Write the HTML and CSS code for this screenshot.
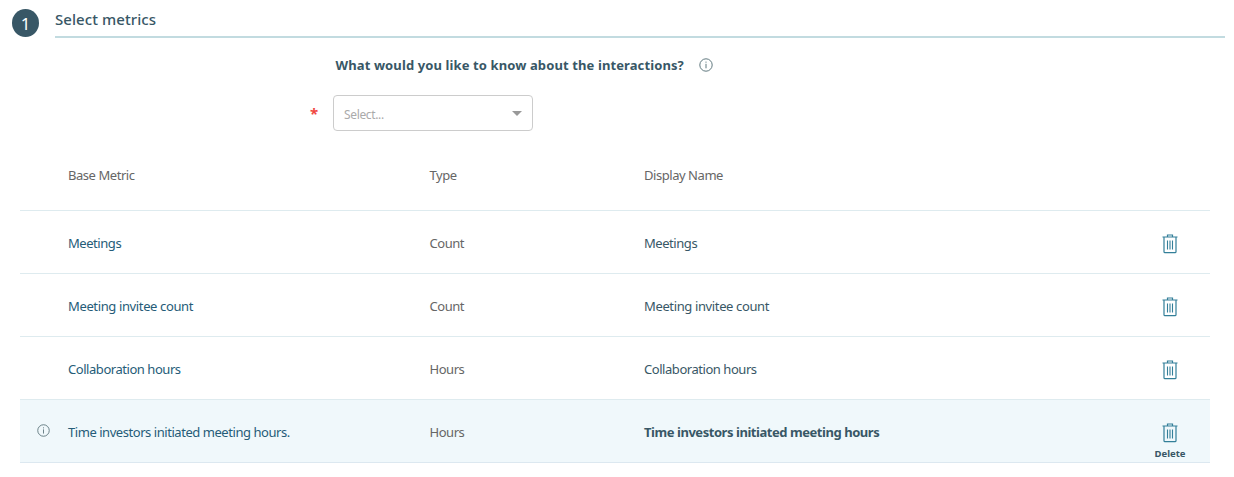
FILE: index.html
```html
<!DOCTYPE html>
<html lang="en">
<head>
<meta charset="utf-8">
<title>Select metrics</title>
<link rel="stylesheet" href="styles.css">
</head>
<body>
<svg class="defs" width="0" height="0">
  <symbol id="trash" viewBox="0 0 16 20">
    <path d="M0.5 3H15.5M5.5 3V1H10.5V3M2 3.5V17.8Q2 18.7 3 18.7H13Q14 18.7 14 17.8V3.5" fill="none" stroke="currentColor" stroke-width="1.2"/>
    <path d="M5.5 6.5V15.5M8 6.5V15.5M10.5 6.5V15.5" stroke="currentColor" stroke-width="1.1"/>
  </symbol>
  <symbol id="info" viewBox="0 0 14 14">
    <circle cx="7" cy="7" r="6.2" fill="none" stroke="currentColor"/>
    <path d="M7 5.8V10.3M7 3.6V4.7" stroke="currentColor"/>
  </symbol>
</svg>
<header class="step">
  <span class="step-number">1</span>
  <h1 class="step-title">Select metrics</h1>
</header>
<section class="question">
  <div class="question-row">
    <span class="question-text">What would you like to know about the interactions?</span>
    <svg class="info"><use href="#info"/></svg>
  </div>
  <div class="field">
    <span class="required">*</span>
    <div class="select"><span class="placeholder">Select...</span><span class="caret"></span></div>
  </div>
</section>
<main class="table">
  <div class="row head"><span></span><span>Base Metric</span><span>Type</span><span>Display Name</span><span></span></div>
  <div class="row"><span></span><span class="metric">Meetings</span><span>Count</span><span class="name">Meetings</span><span class="action"><svg class="trash"><use href="#trash"/></svg></span></div>
  <div class="row"><span></span><span class="metric invitee">Meeting invitee count</span><span>Count</span><span class="name invitee">Meeting invitee count</span><span class="action"><svg class="trash"><use href="#trash"/></svg></span></div>
  <div class="row"><span></span><span class="metric">Collaboration hours</span><span>Hours</span><span class="name">Collaboration hours</span><span class="action"><svg class="trash"><use href="#trash"/></svg></span></div>
  <div class="row active"><span class="hint"><svg class="info small"><use href="#info"/></svg></span><span class="metric">Time investors initiated meeting hours.</span><span>Hours</span><span class="name strong">Time investors initiated meeting hours</span><span class="action"><svg class="trash"><use href="#trash"/></svg><span class="delete">Delete</span></span></div>
</main>
</body>
</html>
```
FILE: styles.css
```css
* { box-sizing: border-box; }
body { margin: 0; height: 477px; overflow: hidden; background: #fff; color: #666; font: 13px/18px "Noto Sans", "Open Sans", sans-serif; }
.defs { display: block; }
.step { display: flex; height: 38px; padding: 0 9px 0 12px; }
.step-number { width: 27px; height: 28px; margin: 9px 16px 0 0; border-radius: 50%; background: #385766; color: #fff; font-size: 17px; line-height: 29px; text-align: center; }
.step-title { flex: 1; margin: 0; padding-top: 9px; border-bottom: 2px solid #c2dbe0; color: #385766; font-size: 15px; line-height: 21px; font-weight: 500; letter-spacing: 0.07px; }
.question { display: flow-root; height: 109px; }
.question-row { display: flex; align-items: center; height: 18px; padding-left: 335.5px; margin-top: 18px; }
.question-text { width: 349.5px; color: #385766; font-weight: 700; letter-spacing: 0.11px; white-space: nowrap; }
.info { width: 14px; height: 14px; margin-left: 13.5px; color: #61797f; }
.field { display: flex; padding-left: 310px; margin-top: 21px; }
.required { width: 23px; padding-top: 9px; color: #f04842; font-size: 15px; font-weight: 700; }
.select { display: flex; justify-content: space-between; width: 200px; height: 36px; padding: 10px 10px 0; border: 1px solid #ccc; border-radius: 4px; }
.placeholder { color: #aaa; font-size: 12px; letter-spacing: -0.35px; }
.caret { width: 10px; height: 5px; margin-top: 5px; border: 5px solid transparent; border-top-color: #999; border-bottom: 0; }
.table { width: 1190px; margin-left: 20px; letter-spacing: -0.45px; }
.row { display: grid; grid-template-columns: 48px 361.5px 214.5px 485px 81px; align-items: center; height: 63px; padding-top: 2px; border-bottom: 1px solid #deebef; white-space: nowrap; }
.head { height: 64px; padding: 0 0 8px; }
.metric { color: #255c78; }
.name { color: #385766; }
.invitee { letter-spacing: -0.37px; }
.strong { font-weight: 700; }
.active { background: #f0f8fb; border-color: #dce8f0; }
.hint { padding-bottom: 3px; }
.info.small { display: block; width: 13px; height: 13px; margin-left: 17px; }
.action { position: relative; display: flex; justify-content: center; padding-top: 1px; }
.trash { width: 16px; height: 20px; color: #337f99; }
.delete { position: absolute; top: 26px; left: 0; width: 100%; padding-left: 1px; color: #385766; font-size: 9.5px; line-height: 12px; font-weight: 700; letter-spacing: 0; text-align: center; }
```
